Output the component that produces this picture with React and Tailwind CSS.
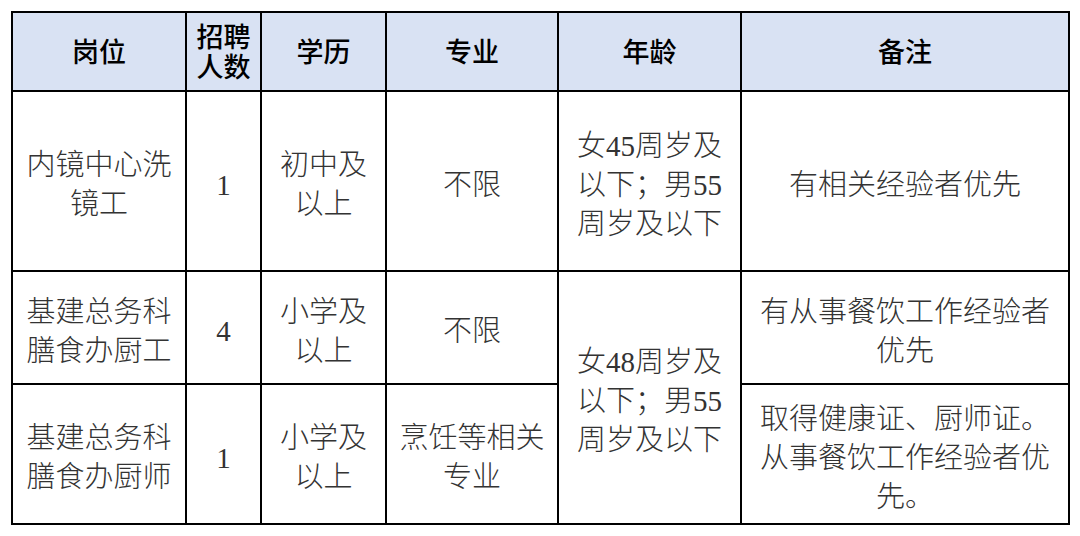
export default function App() {
    const body = "text-[29px] leading-[39px] text-[#333] font-light text-center align-middle border-2 border-black px-1 pt-[8px]";
    const head = "text-[27px] leading-[30px] text-black font-medium text-center align-middle border-2 border-black pt-[3px]";

    return (
        <main className="w-[1080px] h-[536px] bg-white pl-[11px] pt-[11px]"
            style={{ fontFamily: '"Liberation Serif", "Noto Sans CJK SC", serif' }}>
            <table className="table-fixed border-collapse w-[1057px]">
                <colgroup>
                    <col className="w-[174px]" />
                    <col className="w-[75px]" />
                    <col className="w-[125px]" />
                    <col className="w-[172px]" />
                    <col className="w-[183px]" />
                    <col className="w-[328px]" />
                </colgroup>
                <thead>
                    <tr className="h-[79px] bg-[#d9e2f3]">
                        <th className={head}>岗位</th>
                        <th className={head}>招聘<br />人数</th>
                        <th className={head}>学历</th>
                        <th className={head}>专业</th>
                        <th className={head}>年龄</th>
                        <th className={head}>备注</th>
                    </tr>
                </thead>
                <tbody>
                    <tr className="h-[180px]">
                        <td className={body}>内镜中心洗<br />镜工</td>
                        <td className={body}>1</td>
                        <td className={body}>初中及<br />以上</td>
                        <td className={body}>不限</td>
                        <td className={body}>女45周岁及<br />以下；男55<br />周岁及以下</td>
                        <td className={body}>有相关经验者优先</td>
                    </tr>
                    <tr className="h-[113px]">
                        <td className={body}>基建总务科<br />膳食办厨工</td>
                        <td className={body}>4</td>
                        <td className={body}>小学及<br />以上</td>
                        <td className={body}>不限</td>
                        <td className={body} rowSpan={2}>女48周岁及<br />以下；男55<br />周岁及以下</td>
                        <td className={body}>有从事餐饮工作经验者<br />优先</td>
                    </tr>
                    <tr className="h-[140px]">
                        <td className={body}>基建总务科<br />膳食办厨师</td>
                        <td className={body}>1</td>
                        <td className={body}>小学及<br />以上</td>
                        <td className={body}>烹饪等相关<br />专业</td>
                        <td className={body}>取得健康证、厨师证。<br />从事餐饮工作经验者优<br />先。</td>
                    </tr>
                </tbody>
            </table>
        </main>
    );
}
